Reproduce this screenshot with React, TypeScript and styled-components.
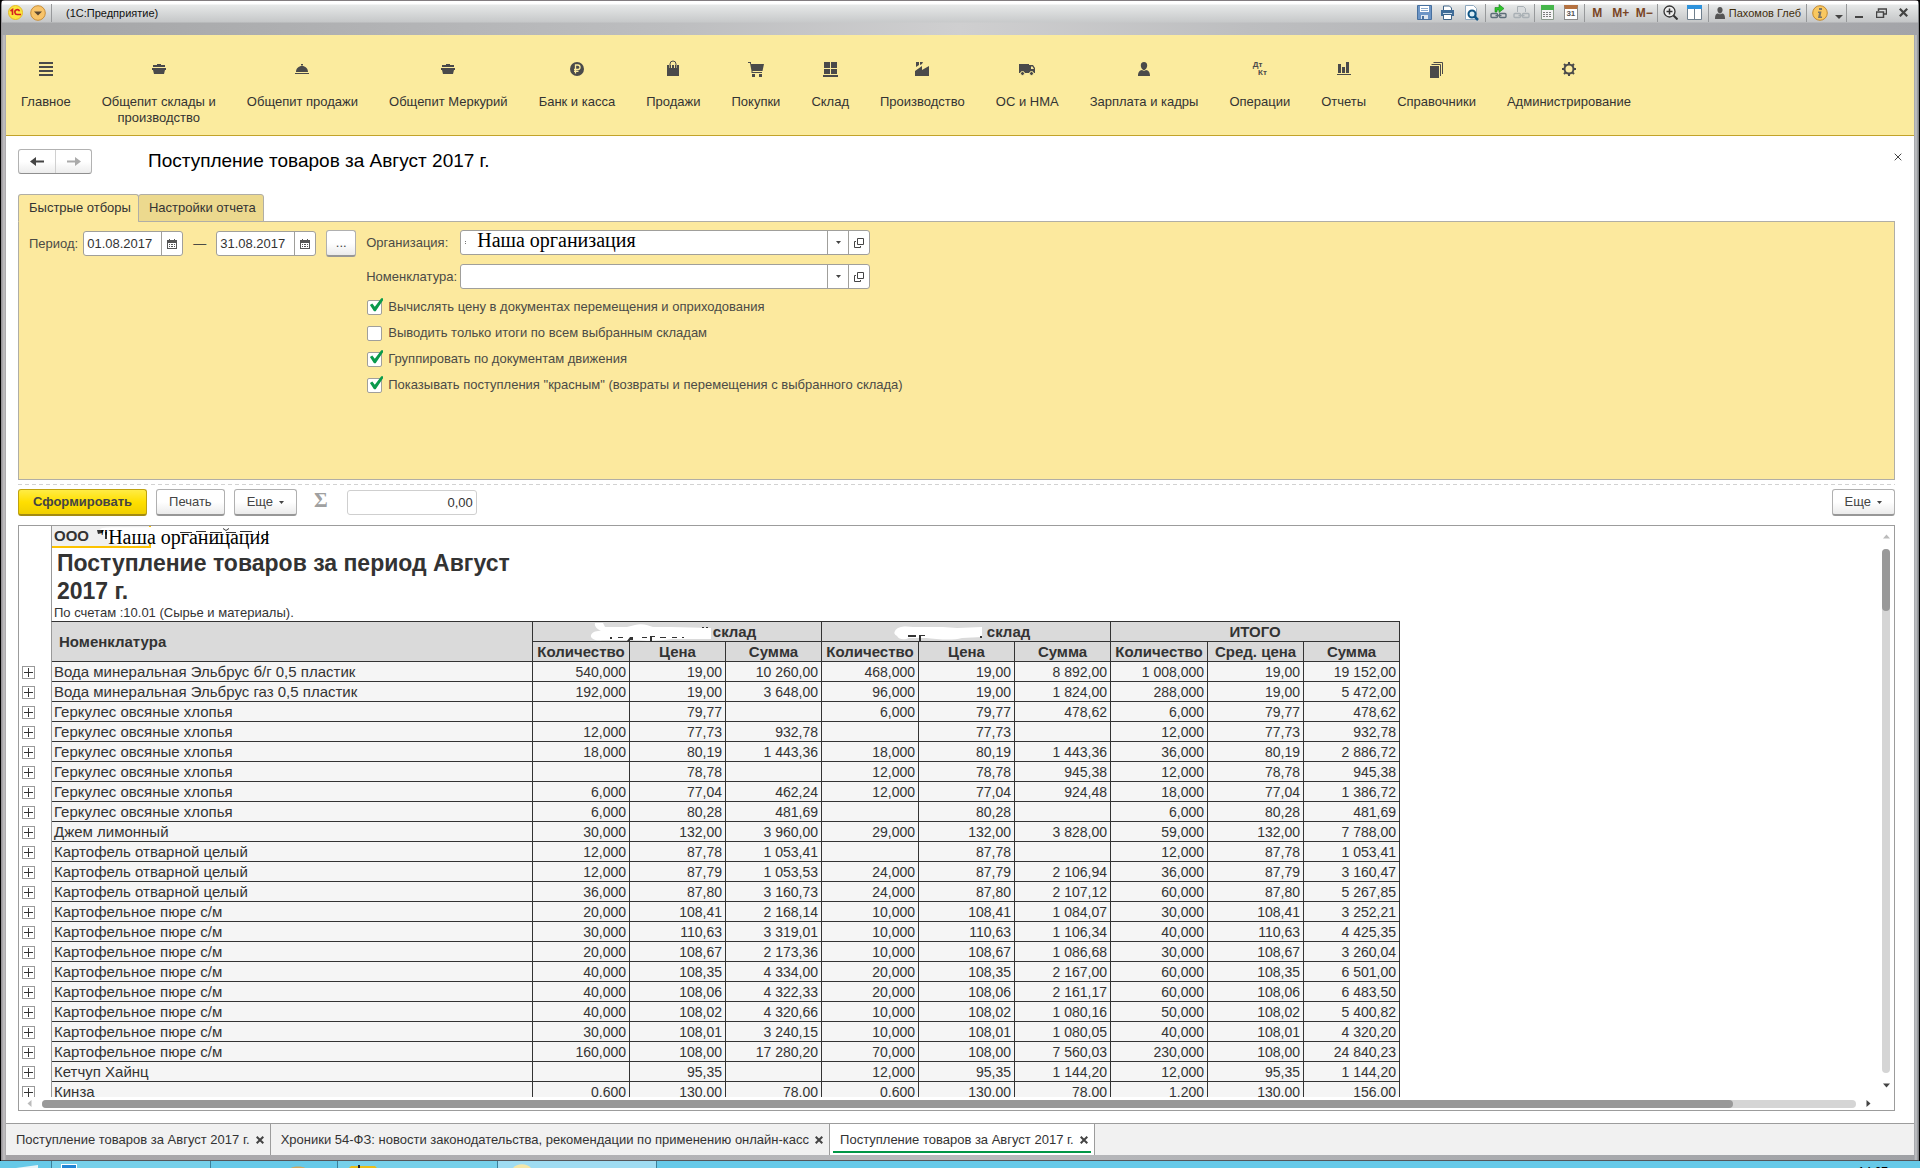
import React, { useState } from "react";
import styled, { createGlobalStyle, css } from "styled-components";

const sans = `"Liberation Sans", Arial, sans-serif`;
const serif = `"Liberation Serif", "Times New Roman", serif`;

const GlobalStyle = createGlobalStyle`
  *, *::before, *::after { box-sizing: border-box; }
  body { margin: 0; font: 13px/16px ${sans}; color: #333; background: #000; }
  button, input { font: inherit; color: inherit; margin: 0; padding: 0; }
  button { border: 0; background: none; }
  svg { display: block; flex: none; }
`;

const Desktop = styled.div`
  height: 100vh;
  display: flex;
  flex-direction: column;
  overflow: hidden;
`;

/* ---------- window frame ---------- */
const Window = styled.div`
  flex: 1;
  min-height: 0;
  display: flex;
  flex-direction: column;
  margin: 0 1px;
  padding: 0 5px 5px;
  border-top: 1px solid #827d80;
  border-bottom: 1px solid #55565a;
  border-radius: 4px 4px 0 0;
  background: linear-gradient(90deg, #8f8c90 0, #c4c2c4 3px, #a5a3a6 5px, #b9babd 50%, #9fa1a5 calc(100% - 5px), #c2c4c7 calc(100% - 3px), #77797c 100%);
`;

const TitleBar = styled.header`
  display: flex;
  align-items: flex-start;
  height: 34px;
  margin: 0 -4px;
  padding: 0 4px 0 2px;
  background:
    linear-gradient(180deg, #fff 0, #fff 3px, #e6e8e8 4px, rgba(200, 202, 203, 0.9) 21px, transparent 22px),
    linear-gradient(90deg, #a3a4a6 0, #bdbec0 35%, #cfcfd0 50%, #bdbec0 65%, #a3a4a8 100%);
`;

const TitleRow = styled.div`
  display: flex;
  align-items: center;
  height: 22px;
  padding-top: 1px;
`;

const AppTitle = styled.span`
  margin-left: 13px;
  font-size: 11px;
  color: #111;
`;

const Tools = styled(TitleRow)`
  margin-left: auto;
`;

const ToolButton = styled.button<{ $w?: number }>`
  display: flex;
  align-items: center;
  justify-content: center;
  width: ${(p) => p.$w ?? 24}px;
  height: 20px;
  font-weight: bold;
  font-size: 12px;
  color: #7a4524;
`;

const ToolSep = styled.i`
  width: 1px;
  height: 18px;
  margin: 0 1px;
  background: #97999b;
`;

const UserButton = styled.button`
  display: flex;
  align-items: center;
  gap: 4px;
  padding: 0 4px 0 5px;
  font-size: 11px;
  color: #3f2d0c;
`;

const Client = styled.div`
  flex: 1;
  min-height: 0;
  display: flex;
  flex-direction: column;
  background: #fff;
`;

/* ---------- section navigation ---------- */
const Sections = styled.nav`
  display: flex;
  gap: 1px;
  height: 101px;
  padding: 23px 0 0;
  background: #fbeb9e;
  border-bottom: 1px solid #c2a32a;
`;

const Section = styled.button`
  display: flex;
  flex-direction: column;
  align-items: center;
  padding: 0 15px;
  color: #333;
  text-align: center;
  white-space: pre;
`;

const SectionIcon = styled.span`
  display: flex;
  align-items: center;
  justify-content: center;
  height: 22px;
  margin-bottom: 14px;
`;

/* ---------- page ---------- */
const Page = styled.main`
  flex: 1;
  min-height: 0;
  display: flex;
  flex-direction: column;
  padding: 0 19px 12px 12px;
`;

const Heading = styled.div`
  display: flex;
  align-items: center;
  height: 50px;
  margin-right: -11px;
`;

const History = styled.div`
  display: flex;
  height: 25px;
  border: 1px solid #b2b2b2;
  border-bottom-color: #8f8f8f;
  border-radius: 3px;
  background: linear-gradient(#fff 50%, #ececec);
`;

const HistoryButton = styled.button`
  display: flex;
  align-items: center;
  justify-content: center;
  width: 36px;
  & + & { border-left: 1px solid #d0d0d0; }
`;

const PageTitle = styled.h1`
  flex: 1;
  margin: 0 0 0 56px;
  font-weight: normal;
  font-size: 19px;
  line-height: 24px;
  color: #000;
`;

const CloseButton = styled.button`
  display: flex;
  padding: 4px;
  margin-bottom: 8px;
`;

const Tabs = styled.div`
  display: flex;
  margin-top: 8px;
`;

const Tab = styled.button<{ $on?: boolean }>`
  height: 28px;
  padding: 0 7px 0 10px;
  margin-bottom: -1px;
  border: 1px solid #b0aea6;
  border-bottom-color: ${(p) => (p.$on ? "#fce99e" : "#b0aea6")};
  border-radius: 3px 3px 0 0;
  background: ${(p) => (p.$on ? "#fce99e" : "#ecd98e")};
  z-index: 1;
  & + & { margin-left: -1px; }
`;

const FilterPanel = styled.section`
  display: flex;
  min-height: 259px;
  padding: 8px 10px;
  gap: 10px;
  border: 1px solid #b0aea6;
  background: #fce99e;
  color: #4b4b46;
`;

const PeriodRow = styled.div`
  display: flex;
  align-items: center;
  gap: 10px;
  height: 27px;
  label { margin-right: -5px; }
`;

const FieldBox = styled.span<{ $w: number }>`
  display: flex;
  width: ${(p) => p.$w}px;
  height: 25px;
  border: 1px solid #a09f9b;
  border-radius: 3px;
  background: #fff;
  color: #333;
  overflow: hidden;
`;

const FieldInput = styled.input<{ $serif?: boolean; $right?: boolean }>`
  flex: 1;
  min-width: 0;
  padding: 0 3px;
  border: 0;
  outline: 0;
  background: transparent;
  ${(p) => p.$right && css`text-align: right;`}
  ${(p) => p.$serif && css`
    padding: 0 0 5px 10px;
    font: 20px/20px ${serif};
    color: #000;
  `}
`;

const FieldButton = styled.button`
  display: flex;
  align-items: center;
  justify-content: center;
  width: 21px;
  border-left: 1px solid #a09f9b;
`;

const Button = styled.button<{ $primary?: boolean }>`
  display: flex;
  align-items: center;
  justify-content: center;
  gap: 6px;
  height: 27px;
  padding: 0 12px;
  border: 1px solid #b0b0b0;
  border-bottom: 2px solid #979797;
  border-radius: 3px;
  background: linear-gradient(#fff 50%, #ebebeb);
  color: #444;
  ${(p) => p.$primary && css`
    padding: 0 14px;
    border-color: #bfa20e;
    border-bottom-color: #a38b12;
    background: linear-gradient(#ffec45, #ffdf00 50%, #f0cf00);
    font-weight: bold;
  `}
`;

const PickButton = styled(Button)`
  width: 30px;
  padding: 0;
`;

const Options = styled.div`
  display: flex;
  flex-direction: column;
`;

const OptionField = styled.div`
  display: flex;
  align-items: center;
  height: 25px;
  & + & { margin-top: 9px; }
  label { width: 94px; }
`;

const CheckList = styled.div`
  margin-top: 5px;
`;

const CheckRow = styled.label`
  display: flex;
  align-items: center;
  gap: 6px;
  height: 26px;
  padding-left: 1px;
`;

const Check = styled.input`
  appearance: none;
  position: relative;
  width: 15px;
  height: 15px;
  border: 1px solid #a09f9b;
  border-radius: 2px;
  background: #fff;
  &:checked::after {
    content: "";
    position: absolute;
    left: 1px;
    top: -3px;
    width: 14px;
    height: 15px;
    background: #0a9a4c;
    clip-path: polygon(5% 50%, 22% 40%, 40% 62%, 86% 5%, 100% 5%, 100% 16%, 46% 92%, 34% 92%);
  }
`;

const Splitter = styled.hr`
  width: 100%;
  height: 1px;
  margin: 4px 0;
  border: 0;
  background: repeating-linear-gradient(90deg, #d2d2d2 0 4px, transparent 4px 7px);
`;

const Actions = styled.div`
  display: flex;
  align-items: center;
  gap: 9px;
  margin-bottom: 9px;
`;

const Sigma = styled.span`
  margin: 0 10px 6px 8px;
  font: bold 21px/20px ${serif};
  color: #a0a0a0;
`;

const SumBox = styled(FieldBox)`
  border-color: #cfcfcf;
`;

const Spacer = styled.span`
  flex: 1;
`;

/* ---------- report ---------- */
const Report = styled.section`
  flex: 1;
  min-height: 0;
  display: grid;
  grid-template-columns: 1fr 14px;
  grid-template-rows: minmax(0, 1fr) 13px;
  border: 1px solid #9c9c9c;
`;

const Sheet = styled.div`
  overflow: hidden;
`;

const SheetHead = styled.div`
  width: 1349px;
  height: 96px;
  margin-left: 32px;
  border-left: 1px solid #999;
  border-bottom: 1px solid #333;
`;

const OrgLine = styled.div`
  position: relative;
  height: 23px;
`;

const OrgCell = styled.div`
  width: 99px;
  height: 22px;
  padding: 2px;
  border-bottom: 2px solid #fcc200;
  border-right: 2px solid #fcc200;
  background: #f0f0f0;
  font-weight: bold;
  font-size: 15px;
`;

const OrgName = styled.span`
  position: absolute;
  left: 48px;
  top: 1px;
  font: 20px/20px ${serif};
  color: #000;
  white-space: nowrap;
`;

const Smudge = styled.svg`
  position: absolute;
  left: 40px;
  top: 0;
`;

const ReportTitle = styled.h2`
  width: 480px;
  margin: 0;
  padding-left: 5px;
  font-size: 23px;
  line-height: 28px;
`;

const ReportNote = styled.p`
  margin: 0;
  padding-left: 2px;
  font-size: 13px;
`;

const Table = styled.table`
  width: 1381px;
  table-layout: fixed;
  border-collapse: separate;
  border-spacing: 0;
  font-size: 14px;
  line-height: 18px;
`;

const Th = styled.th<{ $left?: boolean }>`
  height: 20px;
  padding: ${(p) => (p.$left ? "1px 7px 0" : "1px 0 0")};
  border-right: 1px solid #333;
  border-bottom: 1px solid #333;
  background: #dadada;
  font-size: 15px;
  text-align: ${(p) => (p.$left ? "left" : "center")};
  white-space: nowrap;
`;

const Gutter = styled.td`
  height: 20px;
  padding: 0 0 0 3px;
  border-right: 1px solid #999;
`;

const Cell = styled.td<{ $num?: boolean }>`
  height: 20px;
  padding: 1px 3px 0 2px;
  border-right: 1px solid #333;
  border-bottom: 1px solid #333;
  background: #f5f5f5;
  font-size: ${(p) => (p.$num ? "14px" : "15px")};
  text-align: ${(p) => (p.$num ? "right" : "left")};
  white-space: nowrap;
`;

const Expand = styled.button`
  display: flex;
  align-items: center;
  justify-content: center;
  width: 13px;
  height: 13px;
  border: 1px solid #999;
`;

const Masked = styled.span`
  display: flex;
  align-items: center;
  justify-content: center;
  height: 18px;
  padding-right: 8px;
`;

const VScroll = styled.div`
  display: flex;
  flex-direction: column;
  align-items: center;
  padding: 7px 2px 8px 0;
  gap: 9px;
`;

const HScroll = styled.div`
  display: flex;
  align-items: center;
  padding: 0 8px 0 7px;
  gap: 9px;
`;

const Track = styled.div<{ $v?: boolean }>`
  flex: 1;
  width: ${(p) => (p.$v ? "8px" : "auto")};
  height: ${(p) => (p.$v ? "auto" : "8px")};
  border-radius: 4px;
  background: #d5d5d5;
`;

const Thumb = styled.div<{ $v?: boolean }>`
  width: ${(p) => (p.$v ? "8px" : "93.2%")};
  height: ${(p) => (p.$v ? "62px" : "8px")};
  border-radius: 4px;
  background: #999;
`;

/* ---------- open pages ---------- */
const OpenPages = styled.nav`
  display: flex;
  height: 32px;
  border-top: 1px solid #9c9c9c;
  background: #f1f1f1;
`;

const OpenPage = styled.div<{ $on?: boolean }>`
  display: flex;
  align-items: center;
  gap: 6px;
  padding: 0 6px 0 10px;
  border-right: 1px solid #9c9c9c;
  background: ${(p) => (p.$on ? "linear-gradient(#009646, #009646) center bottom 2px / calc(100% - 6px) 2px no-repeat #fff" : "none")};
  a { color: #333; text-decoration: none; font-size: 13px; }
  button { display: flex; }
`;

/* ---------- taskbar ---------- */
const TaskBar = styled.footer`
  display: flex;
  height: 7px;
  overflow: hidden;
  background: #66c9e8;
`;

const Task = styled.span<{ $w: number; $bg?: string; $pad?: number }>`
  flex: none;
  width: ${(p) => p.$w}px;
  padding-left: ${(p) => p.$pad ?? 0}px;
  border-right: 1px solid #3c7f99;
  background: ${(p) => p.$bg ?? "transparent"};
`;

const Clock = styled.time`
  margin: 4px 32px 0 auto;
  font-size: 12px;
  line-height: 14px;
  color: #000;
`;

/* ---------- drawings ---------- */
const ink = "#4a4a4a";
const I = ({ children, w = 18, h = 18 }: { children: React.ReactNode; w?: number; h?: number }) => (
  <svg width={w} height={h} viewBox={`0 0 ${w} ${h}`} fill={ink}>{children}</svg>
);

const icons: Record<string, React.ReactNode> = {
  menu: <I><path d="M2 2h14v2H2zM2 6h14v2H2zM2 10h14v2H2zM2 14h14v2H2z" /></I>,
  pot: <I><path d="M7 4h4v1h4v2H3V5h4zM2 8h14v2h-1l-1 4H4L3 10H2z" /></I>,
  cloche: <I><path d="M8 4h2v1.500H8zM3 12c0-3.600 2.600-6 6-6s6 2.400 6 6zM2 13h14v1H2z" /></I>,
  ruble: (
    <I>
      <circle cx="9" cy="9" r="7" />
      <path d="M7.500 13.500V5h2.300a2.200 2.200 0 0 1 0 4.500H6M6 11.300h4.500" fill="none" stroke="#fbeb9e" strokeWidth="1.300" />
    </I>
  ),
  bag: <I><path d="M3 5h2v3h1V5h6v3h1V5h2v11H3z" /><path d="M6 8V4a3 3 0 0 1 6 0v4" fill="none" stroke={ink} /><path d="M7.500 8V4.500a1.500 1.500 0 0 1 3 0V8" fill="none" stroke="#fbeb9e" /></I>,
  cart: <I><path d="M1 2h3v2h13l-1.500 7H5.500v1H15v1H4.500V11L3 3H1zM5 14h3v3H5zM12 14h3v3h-3z" /></I>,
  store: <I><path d="M3 2h6v6H3zM10 2h6v6h-6zM3 9h6v5H3zM10 9h6v5h-6zM2 15h15v2H2z" /></I>,
  factory: <I><path d="M3 2h3v3L3 7zM7 2h3L9 4 7 5zM2 11l7-5v4l7-4v10H2z" /></I>,
  truck: (
    <I>
      <path d="M1 4h10v9H1zM11 5h4l2 3v5h-6z" />
      <path d="M13 6.500h1.500L16 9h-3z" fill="#fbeb9e" />
      <circle cx="4.500" cy="13.500" r="2" stroke="#fbeb9e" /><circle cx="13.500" cy="13.500" r="2" stroke="#fbeb9e" />
    </I>
  ),
  person: <I><path d="M9 2c2.200 0 3.200 1.500 3.200 3.500S10.800 10 9 10 5.800 7.500 5.800 5.500 6.800 2 9 2zM3 16c0-4 1.500-5.500 4-6 1 1 3 1 4 0 2.500.5 4 2 4 6z" /></I>,
  report: <I><path d="M3 4h3v9H3zM7 7h3v6H7zM11 2h3v11h-3zM2 14h14v1H2z" /></I>,
  books: <I><path d="M2 6h9v12H2z" /><path d="M3.500 4.500h9V16M5.500 2.500h9V14" fill="none" stroke={ink} /></I>,
  gear: (
    <I>
      <circle cx="9" cy="9" r="4.500" fill="none" stroke={ink} strokeWidth="2" />
      <path d="M9 2v3M9 13v3M2 9h3M13 9h3M4 4l2 2M12 12l2 2M4 14l2-2M12 6l2-2" stroke={ink} strokeWidth="2" />
    </I>
  ),
};

const DebitCredit = styled.span`
  display: flex;
  flex-direction: column;
  width: 14px;
  font-weight: bold;
  font-size: 8px;
  line-height: 8px;
  color: ${ink};
  text-align: left;
  span + span { text-align: right; }
`;

const Cross = ({ size = 8, stroke = 1 }: { size?: number; stroke?: number }) => (
  <svg width={size} height={size} viewBox="0 0 8 8"><path d="M.7.7l6.600 6.600M7.300.7L.7 7.300" stroke="#444" strokeWidth={stroke} /></svg>
);
const Arrow = ({ flip, color }: { flip?: boolean; color: string }) => (
  <svg width="14" height="11" viewBox="0 0 14 11">
    <path d={flip ? "M0 4.500h8V1l6 4.500L8 10V6.500H0z" : "M14 4.500H6V1L0 5.500 6 10V6.500h8z"} fill={color} />
  </svg>
);
const Caret = () => <svg width="5" height="3" viewBox="0 0 5 3"><path d="M0 0h5L2.500 3z" fill="#444" /></svg>;
const Tri = ({ d, color }: { d: string; color: string }) => (
  <svg width="7" height="7" viewBox="0 0 7 7"><path d={d} fill={color} /></svg>
);
const CalendarGlyph = () => (
  <svg width="10" height="10" viewBox="0 0 10 10">
    <path d="M2 0h1v1h4V0h1v1h2v9H0V1h2z" fill="#555" />
    <path d="M1 4h8v5H1z" fill="#fff" />
    <path d="M2 5h1v1H2zM4 5h2v1H4zM7 5h1v1H7zM2 7h1v1H2zM4 7h2v1H4zM7 7h1v1H7z" fill="#555" />
  </svg>
);
const OpenGlyph = () => (
  <svg width="10" height="10" viewBox="0 0 10 10" fill="none" stroke="#444"><path d="M3.500.5h6v6h-6zM2 3.500H.5v6h6V8" /></svg>
);
const PlusGlyph = () => <svg width="9" height="9" viewBox="0 0 9 9"><path d="M4 0h1v4h4v1H5v4H4V5H0V4h4z" fill="#333" /></svg>;

const LinkGlyph = ({ on }: { on?: boolean }) => (
  <svg width="17" height="17" viewBox="0 0 17 17">
    <g fill="none" stroke={on ? "#5d6d78" : "#a9b0b5"} strokeWidth="1.400">
      <rect x="1" y="9.500" width="6.500" height="4" rx="1" /><rect x="9.500" y="9.500" width="6.500" height="4" rx="1" /><path d="M5.500 11.500h6" />
    </g>
    {on ? <path d="M5 8V3.500h4V.5l5 4-5 4V6H7v2z" fill="#2fc52c" stroke="#14801a" strokeWidth=".6" />
      : <path d="M4.500 8V2.500h6l2 2V8" fill="#d9dcde" stroke="#a9b0b5" />}
  </svg>
);

const toolIcons = {
  save: (
    <svg width="15" height="15" viewBox="0 0 15 15"><path d="M.5.5h14v14H.5z" fill="#6c95c6" stroke="#47709f" /><path d="M3 1h9v6H3z" fill="#fff" /><path d="M4 3h7v1H4zM4 5h7v1H4z" fill="#8aa9cc" /><path d="M4 10h7v4H4z" fill="#dde6ef" /><path d="M5 11h2v3H5z" fill="#47709f" /></svg>
  ),
  print: (
    <svg width="15" height="15" viewBox="0 0 15 15"><path d="M3.500 5V1h6l2 2v2" fill="#fff" stroke="#3f6488" /><path d="M1 5h13v6H1z" fill="#3f6c98" /><path d="M3 8h9v1H3z" fill="#cfe0ee" /><path d="M3.500 9.500h8v5h-8z" fill="#fff" stroke="#3f6488" /></svg>
  ),
  preview: (
    <svg width="15" height="16" viewBox="0 0 15 16"><path d="M1.500.5h8l3 3v11h-11z" fill="#fff" stroke="#8fa9bf" /><circle cx="8" cy="9" r="3.500" fill="#d8ecf5" stroke="#0f5584" strokeWidth="2" /><path d="M10.500 11.500l3.500 3.500" stroke="#0f5584" strokeWidth="2.500" /></svg>
  ),
  calc: (
    <svg width="13" height="15" viewBox="0 0 13 15"><path d="M.5.5h12v14H.5z" fill="#f4f4f4" stroke="#8b9a8b" /><path d="M0 0h13v5H0z" fill="#46b64b" /><path d="M2 7h2v1H2zM5 7h2v1H5zM8 7h2v1H8zM2 9h2v1H2zM5 9h2v1H5zM8 9h2v1H8zM2 11h2v1H2zM5 11h2v1H5zM8 11h2v1H8z" fill="#7c7c7c" /></svg>
  ),
  zoom: (
    <svg width="15" height="15" viewBox="0 0 15 15" fill="none" stroke="#333"><circle cx="6.500" cy="6.500" r="5.500" fill="#eee" strokeWidth="1.300" /><path d="M3.500 6.500h6M6.500 3.500v6" strokeWidth="1.500" /><path d="M10.500 10.500l4 4" strokeWidth="2" /></svg>
  ),
  panes: (
    <svg width="15" height="15" viewBox="0 0 15 15"><path d="M.5.5h14v14H.5z" fill="#fff" stroke="#6f7f8c" /><path d="M0 0h15v4H0z" fill="#2e93dc" /><path d="M7 4h1v11H7z" fill="#6f7f8c" /></svg>
  ),
  info: (
    <svg width="16" height="16" viewBox="0 0 16 16"><circle cx="8" cy="8" r="7.300" fill="#f9c860" stroke="#c48a2e" /><path d="M7 3h3v2H7zM6 6.500h3.500l-1 5H10V13H6l1-5H6z" fill="#7c7566" /></svg>
  ),
};

const DayIcon = styled.span`
  display: block;
  width: 14px;
  height: 15px;
  border: 1px solid #8a8a8a;
  border-top: 4px solid #b5713f;
  background: #fff;
  font: bold 8px/10px ${sans};
  color: #555;
`;

const sections: [string, string][] = [
  ["menu", "Главное"], ["pot", "Общепит склады и\nпроизводство"], ["cloche", "Общепит продажи"],
  ["pot", "Общепит Меркурий"], ["ruble", "Банк и касса"], ["bag", "Продажи"], ["cart", "Покупки"],
  ["store", "Склад"], ["factory", "Производство"], ["truck", "ОС и НМА"], ["person", "Зарплата и кадры"],
  ["dtkt", "Операции"], ["report", "Отчеты"], ["books", "Справочники"], ["gear", "Администрирование"],
];

const gh = "Геркулес овсяные хлопья";
const kc = "Картофель отварной целый";
const kp = "Картофельное пюре с/м";
const rows: string[][] = [
  ["Вода минеральная Эльбрус б/г 0,5 пластик", "540,000", "19,00", "10 260,00", "468,000", "19,00", "8 892,00", "1 008,000", "19,00", "19 152,00"],
  ["Вода минеральная Эльбрус газ 0,5 пластик", "192,000", "19,00", "3 648,00", "96,000", "19,00", "1 824,00", "288,000", "19,00", "5 472,00"],
  [gh, "", "79,77", "", "6,000", "79,77", "478,62", "6,000", "79,77", "478,62"],
  [gh, "12,000", "77,73", "932,78", "", "77,73", "", "12,000", "77,73", "932,78"],
  [gh, "18,000", "80,19", "1 443,36", "18,000", "80,19", "1 443,36", "36,000", "80,19", "2 886,72"],
  [gh, "", "78,78", "", "12,000", "78,78", "945,38", "12,000", "78,78", "945,38"],
  [gh, "6,000", "77,04", "462,24", "12,000", "77,04", "924,48", "18,000", "77,04", "1 386,72"],
  [gh, "6,000", "80,28", "481,69", "", "80,28", "", "6,000", "80,28", "481,69"],
  ["Джем лимонный", "30,000", "132,00", "3 960,00", "29,000", "132,00", "3 828,00", "59,000", "132,00", "7 788,00"],
  [kc, "12,000", "87,78", "1 053,41", "", "87,78", "", "12,000", "87,78", "1 053,41"],
  [kc, "12,000", "87,79", "1 053,53", "24,000", "87,79", "2 106,94", "36,000", "87,79", "3 160,47"],
  [kc, "36,000", "87,80", "3 160,73", "24,000", "87,80", "2 107,12", "60,000", "87,80", "5 267,85"],
  [kp, "20,000", "108,41", "2 168,14", "10,000", "108,41", "1 084,07", "30,000", "108,41", "3 252,21"],
  [kp, "30,000", "110,63", "3 319,01", "10,000", "110,63", "1 106,34", "40,000", "110,63", "4 425,35"],
  [kp, "20,000", "108,67", "2 173,36", "10,000", "108,67", "1 086,68", "30,000", "108,67", "3 260,04"],
  [kp, "40,000", "108,35", "4 334,00", "20,000", "108,35", "2 167,00", "60,000", "108,35", "6 501,00"],
  [kp, "40,000", "108,06", "4 322,33", "20,000", "108,06", "2 161,17", "60,000", "108,06", "6 483,50"],
  [kp, "40,000", "108,02", "4 320,66", "10,000", "108,02", "1 080,16", "50,000", "108,02", "5 400,82"],
  [kp, "30,000", "108,01", "3 240,15", "10,000", "108,01", "1 080,05", "40,000", "108,01", "4 320,20"],
  [kp, "160,000", "108,00", "17 280,20", "70,000", "108,00", "7 560,03", "230,000", "108,00", "24 840,23"],
  ["Кетчуп Хайнц", "", "95,35", "", "12,000", "95,35", "1 144,20", "12,000", "95,35", "1 144,20"],
  ["Кинза", "0,600", "130,00", "78,00", "0,600", "130,00", "78,00", "1,200", "130,00", "156,00"],
];

const options: [string, boolean][] = [
  ["Вычислять цену в документах перемещения и оприходования", true],
  ["Выводить только итоги по всем выбранным складам", false],
  ["Группировать по документам движения", true],
  ['Показывать поступления "красным" (возвраты и перемещения с выбранного склада)', true],
];

const openPages = [
  "Поступление товаров за Август 2017 г.",
  "Хроники 54-ФЗ: новости законодательства, рекомендации по применению онлайн-касс",
  "Поступление товаров за Август 2017 г.",
];

const DateField = ({ id, value }: { id: string; value: string }) => (
  <FieldBox $w={100}>
    <FieldInput id={id} defaultValue={value} aria-label={id === "to" ? "Конец периода" : undefined} />
    <FieldButton aria-label="Выбрать дату"><CalendarGlyph /></FieldButton>
  </FieldBox>
);

const LookupField = ({ id, label, value, marked }: { id: string; label: string; value: string; marked?: boolean }) => (
  <OptionField>
    <label htmlFor={id}>{label}</label>
    <FieldBox $w={410}>
      {marked && <svg width="6" height="23" viewBox="0 0 6 23"><path d="M4 10h1v1H4zM4 12h1v1H4z" fill="#777" /></svg>}
      <FieldInput id={id} defaultValue={value} $serif={marked} />
      <FieldButton aria-label="Список"><Caret /></FieldButton>
      <FieldButton aria-label="Открыть"><OpenGlyph /></FieldButton>
    </FieldBox>
  </OptionField>
);

export default function App() {
  const [checks, setChecks] = useState(options.map((o) => o[1]));
  return (
    <Desktop>
      <GlobalStyle />
      <Window>
        <TitleBar>
          <TitleRow>
            <ToolButton $w={22} aria-label="1С">
              <svg width="15" height="15" viewBox="0 0 15 15">
                <circle cx="7.500" cy="7.500" r="7" fill="#fbe53c" stroke="#e5b928" />
                <path d="M2.500 6l2-1.500V10M11.500 6.200A2.400 2.400 0 1 0 9.500 9.500H13" fill="none" stroke="#d6201f" strokeWidth="1.600" />
              </svg>
            </ToolButton>
            <ToolButton $w={24} aria-label="Главное меню">
              <svg width="16" height="16" viewBox="0 0 16 16"><circle cx="8" cy="8" r="7.300" fill="#f8c46a" stroke="#c98f38" /><path d="M4 6.500h8L8 10.500z" fill="#5a4630" /></svg>
            </ToolButton>
            <ToolSep />
            <AppTitle>(1С:Предприятие)</AppTitle>
          </TitleRow>
          <Tools>
            <ToolButton $w={23} aria-label="Сохранить">{toolIcons.save}</ToolButton>
            <ToolButton aria-label="Печать">{toolIcons.print}</ToolButton>
            <ToolButton aria-label="Просмотр">{toolIcons.preview}</ToolButton>
            <ToolSep />
            <ToolButton $w={23} aria-label="Получить ссылку"><LinkGlyph on /></ToolButton>
            <ToolButton $w={23} aria-label="Перейти по ссылке"><LinkGlyph /></ToolButton>
            <ToolSep />
            <ToolButton $w={23} aria-label="Калькулятор">{toolIcons.calc}</ToolButton>
            <ToolButton $w={24} aria-label="Календарь"><DayIcon>31</DayIcon></ToolButton>
            <ToolSep />
            <ToolButton $w={23}>M</ToolButton>
            <ToolButton $w={24}>M+</ToolButton>
            <ToolButton $w={23}>M−</ToolButton>
            <ToolSep />
            <ToolButton $w={24} aria-label="Масштаб">{toolIcons.zoom}</ToolButton>
            <ToolButton $w={24} aria-label="Панели">{toolIcons.panes}</ToolButton>
            <ToolSep />
            <UserButton>
              <svg width="10" height="12" viewBox="0 0 10 12"><path d="M5 0c2 0 2.600 1.500 2.600 3S6.500 6.500 5 6.500 2.400 4.500 2.400 3 3 0 5 0zM0 12c0-4 1-5.500 3-5.500 1 1 3 1 4 0 2 0 3 1.500 3 5.500z" fill="#555" /></svg>
              Пахомов Глеб
            </UserButton>
            <ToolSep />
            <ToolButton $w={24} aria-label="Справка">{toolIcons.info}</ToolButton>
            <ToolButton $w={13} aria-label="Ещё"><svg width="8" height="14" viewBox="0 0 8 14"><path d="M0 9h8l-4 4z" fill="#444" /></svg></ToolButton>
            <ToolSep />
            <ToolButton $w={22} aria-label="Свернуть"><svg width="8" height="12" viewBox="0 0 8 12"><path d="M0 9h8v2H0z" fill="#444" /></svg></ToolButton>
            <ToolButton $w={22} aria-label="Восстановить">
              <svg width="11" height="10" viewBox="0 0 11 10" fill="none" stroke="#444"><path d="M2.500 3V1h8v5H8" strokeWidth="1.500" /><path d="M.5 4h7v5.500h-7z" strokeWidth="1.500" /></svg>
            </ToolButton>
            <ToolButton $w={22} aria-label="Закрыть"><Cross size={9} stroke={2} /></ToolButton>
          </Tools>
        </TitleBar>

        <Client>
          <Sections>
            {sections.map(([icon, label]) => (
              <Section key={label}>
                <SectionIcon>
                  {icon === "dtkt" ? <DebitCredit><span>Дт</span><span>Кт</span></DebitCredit> : icons[icon]}
                </SectionIcon>
                {label}
              </Section>
            ))}
          </Sections>

          <Page>
            <Heading>
              <History>
                <HistoryButton aria-label="Назад"><Arrow color="#444" /></HistoryButton>
                <HistoryButton aria-label="Вперед"><Arrow flip color="#aaa" /></HistoryButton>
              </History>
              <PageTitle>Поступление товаров за Август 2017 г.</PageTitle>
              <CloseButton aria-label="Закрыть"><Cross /></CloseButton>
            </Heading>

            <Tabs role="tablist">
              <Tab role="tab" aria-selected $on>Быстрые отборы</Tab>
              <Tab role="tab" aria-selected={false}>Настройки отчета</Tab>
            </Tabs>

            <FilterPanel>
              <PeriodRow>
                <label htmlFor="from">Период:</label>
                <DateField id="from" value="01.08.2017" />
                <span>—</span>
                <DateField id="to" value="31.08.2017" />
                <PickButton>...</PickButton>
              </PeriodRow>
              <Options>
                <LookupField id="org" label="Организация:" value="Наша организация" marked />
                <LookupField id="item" label="Номенклатура:" value="" />
                <CheckList>
                  {options.map(([label], i) => (
                    <CheckRow key={label}>
                      <Check
                        type="checkbox"
                        checked={checks[i]}
                        onChange={() => setChecks(checks.map((c, j) => (j === i ? !c : c)))}
                      />
                      {label}
                    </CheckRow>
                  ))}
                </CheckList>
              </Options>
            </FilterPanel>

            <Splitter />

            <Actions>
              <Button $primary>Сформировать</Button>
              <Button>Печать</Button>
              <Button>Еще <Caret /></Button>
              <Sigma>Σ</Sigma>
              <SumBox $w={130}><FieldInput $right aria-label="Сумма" defaultValue="0,00" /></SumBox>
              <Spacer />
              <Button>Еще <Caret /></Button>
            </Actions>

            <Report>
              <Sheet>
                <SheetHead>
                  <OrgLine>
                    <OrgCell>ООО</OrgCell>
                    <Smudge width="190" height="21" viewBox="0 0 190 21">
                      <path d="M8 3c6-3 20-1 50-2l10 1v16H50c-6 3-18 2-24 1-6-2-14-7-18-16z" fill="#fff" />
                      <path d="M5 4h7l-2 3-4 1zM13 6h2v7h-2zM88 6h12v1H88zM104 5h10v1h-10zM118 6h12v1h-12zM131 2l3 2 3-2v1l-3 2-3-2zM134 6h10v1h-10zM148 5h12v1h-12zM166 5h1v4h-1zM174 5h2v5h-2zM120 17h18v1h-18z" fill="#333" />
                    </Smudge>
                    <OrgName>"Наша органицация</OrgName>
                  </OrgLine>
                  <ReportTitle>Поступление товаров за период Август 2017 г.</ReportTitle>
                  <ReportNote>По счетам :10.01 (Сырье и материалы).</ReportNote>
                </SheetHead>
                <Table>
                  <colgroup>
                    <col style={{ width: 33 }} />
                    <col style={{ width: 481 }} />
                    {[0, 1, 2].map((g) => (
                      <React.Fragment key={g}>
                        <col style={{ width: 97 }} /><col style={{ width: 96 }} /><col style={{ width: 96 }} />
                      </React.Fragment>
                    ))}
                  </colgroup>
                  <thead>
                    <tr>
                      <Gutter />
                      <Th $left rowSpan={2}>Номенклатура</Th>
                      <Th colSpan={3}>
                        <Masked>
                          <svg width="123" height="18" viewBox="0 0 123 18">
                            <path d="M5 0l8 0 2 4h22l8-2c8-2 14 1 18 2h18l40 1v11H82c-12 2-30 2-40 1H12C6 18 0 16 1 12c2-4 6-4 10-4C7 6 4 3 5 0z" fill="#fff" />
                            <path d="M20 14h2v2h-2zM28 14h5v1h-5zM40 14h3v3h-3v1h-3zM52 14h5v1h-5zM60 13h5v1h-3v4h-2zM70 14h6v1h-6zM82 14h5v1h-5zM92 14h2v1h-2zM112 4h2v1h-2zM116 4h2v1h-2z" fill="#333" />
                          </svg>
                          склад
                        </Masked>
                      </Th>
                      <Th colSpan={3}>
                        <Masked>
                          <svg width="93" height="18" viewBox="0 0 93 18">
                            <path d="M1 8c3-5 10-5 18-4h30l14 1 25-1v10l-20 1c-10 3-26 1-36 0H15c-4 2-10 2-12-2C0 11 0 10 1 8z" fill="#fff" />
                            <path d="M14 12h8v2h-8zM25 12h6v1h-4v5h-2zM86 13h2v2h-2z" fill="#333" />
                          </svg>
                          склад
                        </Masked>
                      </Th>
                      <Th colSpan={3}>ИТОГО</Th>
                    </tr>
                    <tr>
                      <Gutter />
                      {["Количество", "Цена", "Сумма", "Количество", "Цена", "Сумма", "Количество", "Сред. цена", "Сумма"].map((h, i) => (
                        <Th key={i}>{h}</Th>
                      ))}
                    </tr>
                  </thead>
                  <tbody>
                    {rows.map((r, i) => (
                      <tr key={i}>
                        <Gutter><Expand aria-label="Развернуть"><PlusGlyph /></Expand></Gutter>
                        {r.map((c, j) => <Cell key={j} $num={j > 0}>{c}</Cell>)}
                      </tr>
                    ))}
                  </tbody>
                </Table>
              </Sheet>
              <VScroll>
                <Tri d="M0 5.500L3.500 1.500 7 5.500z" color="#bbb" />
                <Track $v><Thumb $v /></Track>
                <Tri d="M0 1.500h7L3.500 5.500z" color="#444" />
              </VScroll>
              <HScroll>
                <Tri d="M5.500 0v7L1.500 3.500z" color="#bbb" />
                <Track><Thumb /></Track>
                <Tri d="M1.500 0v7l4-3.500z" color="#444" />
              </HScroll>
            </Report>
          </Page>

          <OpenPages>
            {openPages.map((title, i) => (
              <OpenPage key={i} $on={i === 2}>
                <a href="#page">{title}</a>
                <button aria-label="Закрыть"><Cross stroke={2} /></button>
              </OpenPage>
            ))}
          </OpenPages>
        </Client>
      </Window>

      <TaskBar>
        <Task $w={52} $pad={16}><svg width="24" height="7"><path d="M0 7l22-3v3z" fill="#e8f4f8" /></svg></Task>
        <Task $w={159} $bg="#76d0ea" $pad={9}><svg width="16" height="7"><path d="M0 3h16v4H0z" fill="#fff" /><path d="M1 4h14v3H1z" fill="#2286d6" /></svg></Task>
        <Task $w={127} $pad={80}><svg width="14" height="7"><path d="M0 7c2-2 12-2 14 0z" fill="#c9a763" /></svg></Task>
        <Task $w={160} $bg="#76d0ea" $pad={11}><svg width="28" height="7"><path d="M0 7l2-2h24l2 2z" fill="#e9bd18" /><path d="M9 4h2v3H9z" fill="#222" /></svg></Task>
        <Task $w={159} $bg="#9fdcf2" $pad={15}><svg width="20" height="7"><path d="M0 7c4-5 14-5 18 0z" fill="#f4e7a8" /></svg></Task>
        <Clock>14:07</Clock>
      </TaskBar>
    </Desktop>
  );
}
